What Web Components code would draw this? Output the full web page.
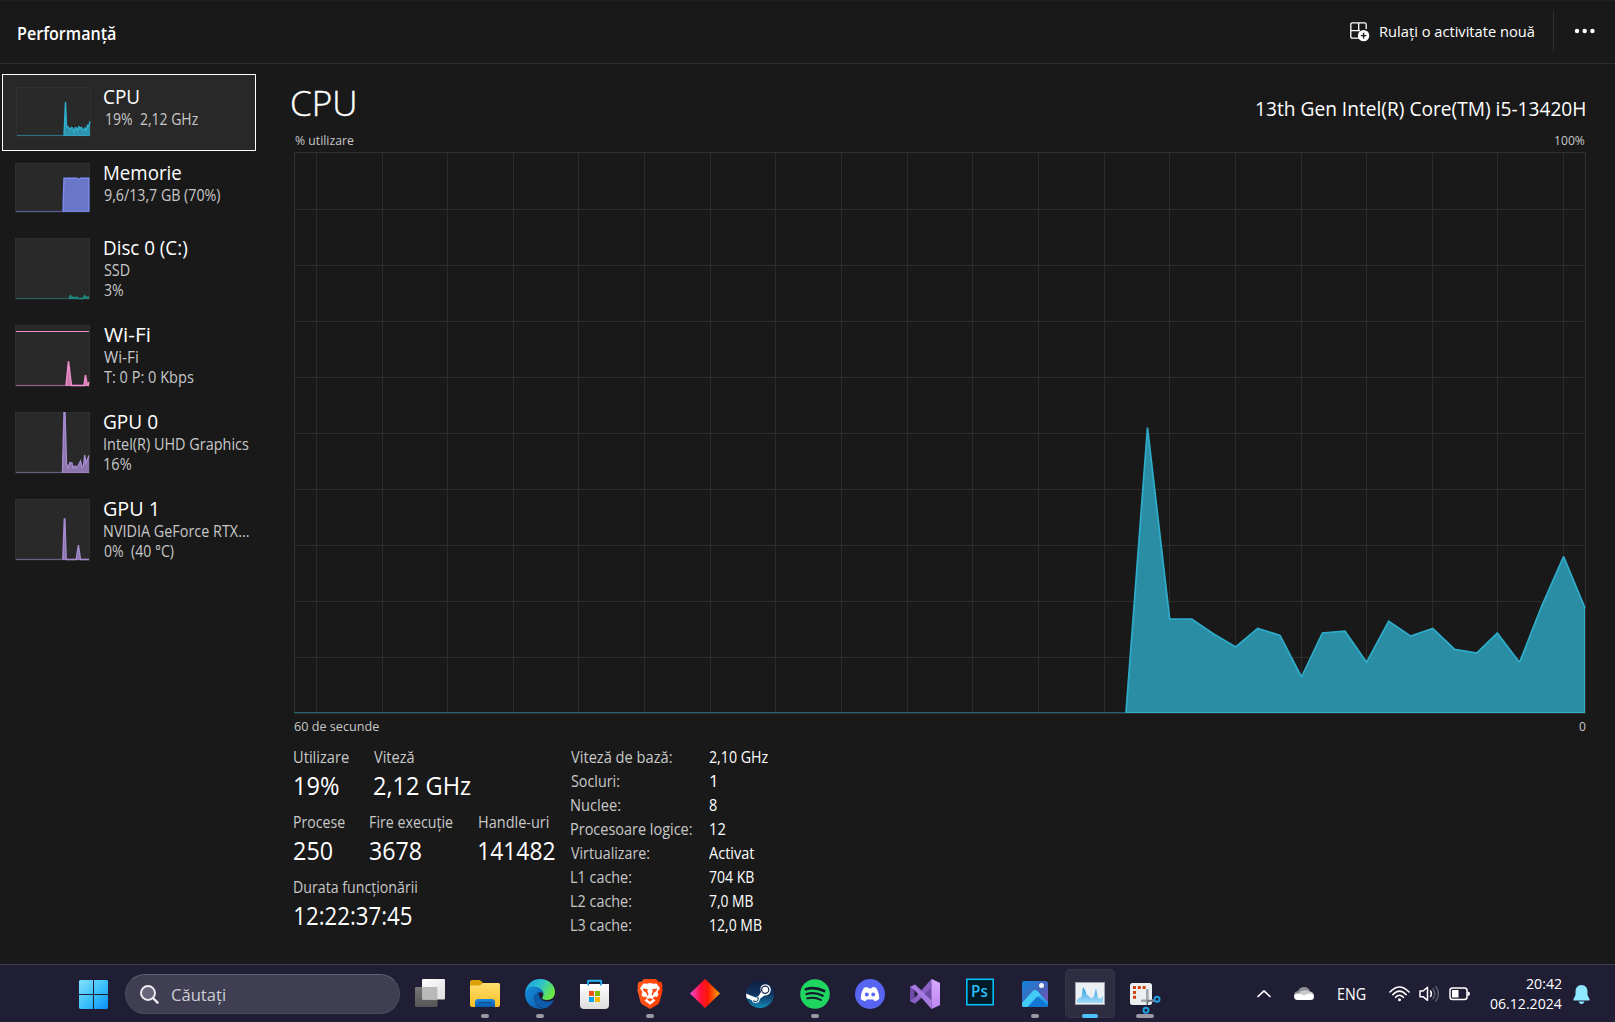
<!DOCTYPE html>
<html lang="ro">
<head>
<meta charset="utf-8">
<title>Performanță</title>
<style>
html,body{margin:0;height:100%;background:#191919;overflow:hidden}
body{font-family:"Open Sans","Noto Sans",sans-serif;color:#fff}
</style>
</head>
<body>
<task-manager></task-manager>
<script>
const FAMILY = '"Open Sans","Noto Sans",sans-serif';
const ruler = document.createElement('canvas').getContext('2d');

function define(name, html, setup) {
  const t = document.createElement('template');
  t.innerHTML = html;
  customElements.define(name, class extends HTMLElement {
    connectedCallback() {
      if (this.shadowRoot) return;
      this.attachShadow({ mode: 'open' }).appendChild(t.content.cloneNode(true));
      if (setup) setup(this, this.shadowRoot);
    }
  });
}

/* Text line: w = ink width, s = font size, h = box height, b = baseline inside the box */
define('t-l', `<style>
:host{display:block;flex:none;color:#fff}
span{display:block;width:max-content;white-space:pre;transform-origin:0 0}
</style><span><slot></slot></span>`, (el, root) => {
  const a = (n, d) => +(el.getAttribute(n) || d);
  const s = a('s', 15.4), wt = a('wt', 400), w = a('w', 50), h = a('h', 20), b = a('b', 16);
  ruler.font = `${wt} ${s}px ${FAMILY}`;
  const m = ruler.measureText(el.textContent);
  const k = w / (m.actualBoundingBoxLeft + m.actualBoundingBoxRight);
  const lead = Math.round(1.069 * s) - Math.round(0.293 * s);
  el.style.width = w + 'px';
  el.style.height = h + 'px';
  const sp = root.querySelector('span');
  sp.style.cssText = `font:${wt} ${s}px/${2 * b - lead}px ${FAMILY};transform:translateX(${m.actualBoundingBoxLeft * k}px) scaleX(${k})`;
  if (el.hasAttribute('dim')) el.style.color = '#c8c8c8';
});

const LOAD = [[1126,712.7],[1147.5,427.5],[1169.7,619],[1191.7,619],[1213.3,633.7],[1235.7,647],[1257.7,628.4],[1280,635.4],[1301.5,677],[1322.4,633],[1345,631.2],[1366.5,662.3],[1388.7,621.2],[1410.7,636.1],[1432.7,628.4],[1454.7,649.4],[1476.7,653.1],[1497.3,633.1],[1519.6,662.4],[1541.6,606.3],[1563.6,556.5],[1585,608]];

const MINI = {
  cpu: ['#2fb0cf', LOAD.map(([x, y]) => [48 + (x - 1126) * 26 / 459, 48.5 - (712.7 - y) * 48 / 420]).map((p, i) => i === 1 ? [49.5, 15] : p[1] > 48 ? p : [p[0], 48.5 - (48.5 - p[1]) * .84]).slice(0, -2).concat([[72.8, 39], [74, 34.5]]), 49],
  mem: ['#7c8cf5', [[48,48.5],[49,15.3],[62,15.3],[63.5,16.5],[65.5,15.3],[73.8,15.3],[73.8,48.5]], 49],
  disk: ['#1f8a85', [[54,60.5],[55.5,57.5],[57,60],[58,59],[60,60],[61.5,59],[63,60.5],[68,60.5],[69.5,57.5],[71,59.5],[74,59]], 61],
  net: ['#f48fcf', [[51,60.5],[53.5,36],[56.5,60.5],[69,60.5],[70.4,50],[72,58],[73,60],[74,57]], 61],
  gpu0: ['#a78bd0', [[47.5,60.5],[49,0],[50,0],[51.5,52],[53,56],[55,50.5],[57,51],[58,56],[60,54],[61.5,56],[64,52],[65.5,49],[67,55],[68.5,54],[69.7,43],[71,51],[74,43.5]], 61],
  gpu1: ['#a78bd0', [[47.8,60.5],[49.3,20],[49.9,20],[51.2,60.5],[61.2,60.5],[63.4,46],[65.5,60.5],[74,60.5]], 61]
};
define('mini-graph', `<style>:host{display:block;flex:none;width:75px}svg{display:block}</style><div></div>`, (el, root) => {
  const [c, pts, h] = MINI[el.getAttribute('kind')];
  const line = pts.map(p => p.map(v => v.toFixed(1)).join()).join(' ');
  const end = pts[pts.length - 1][0];
  root.querySelector('div').innerHTML = `<svg width="75" height="${h + .5}" viewBox="0 0 75 ${h + .5}">
  <rect x=".5" y=".5" width="74" height="${h - .5}" fill="#292929" stroke="#303030"/>
  <path d="M1 ${h - .6}H74" stroke="${c}" stroke-opacity=".6"/>
  <polygon points="${pts[0][0]},${h} ${line} ${end},${h}" fill="${c}" fill-opacity=".78"/>
  <polyline points="${line}" fill="none" stroke="${c}" stroke-width="1.4"/>
  ${el.getAttribute('kind') === 'net' ? `<path d="M1 6.5H74" stroke="${c}"/>` : ''}</svg>`;
});

define('perf-item', `<style>
:host{display:flex;flex:none;box-sizing:border-box;height:87px;padding:12px 0 0 15px}
:host([short]){height:75px}
:host([selected]){height:77px;margin:10px 0 0 2px;width:254px;padding:12px 0 0 13px;border:1px solid #fff;background:#282828}
.t{display:flex;flex-direction:column;margin:-12px 0 0 13.7px}
:host([selected]) .t{margin:-13px 0 0 13.4px}
</style><div class="g"></div><div class="t"><slot></slot></div>`, (el, root) => {
  const g = document.createElement('mini-graph');
  g.setAttribute('kind', el.getAttribute('kind'));
  root.querySelector('.g').replaceWith(g);
});

define('side-nav', `<style>:host{display:flex;flex-direction:column;flex:none;width:294px}</style>
<perf-item kind="cpu" selected><t-l w="35" s="19.3" h="34" b="30">CPU</t-l><t-l dim w="92" b="17" style="margin-left:1.2px">19%  2,12 GHz</t-l></perf-item>
<perf-item kind="mem" short><t-l w="77" s="19.3" h="34" b="29">Memorie</t-l><t-l dim w="116">9,6/13,7 GB (70%)</t-l></perf-item>
<perf-item kind="disk"><t-l w="83" s="19.3" h="34" b="29">Disc 0 (C:)</t-l><t-l dim w="26">SSD</t-l><t-l dim w="19">3%</t-l></perf-item>
<perf-item kind="net"><t-l w="46" s="19.3" h="34" b="29">Wi-Fi</t-l><t-l dim w="34">Wi-Fi</t-l><t-l dim w="89.5">T: 0 P: 0 Kbps</t-l></perf-item>
<perf-item kind="gpu0"><t-l w="54" s="19.3" h="34" b="29">GPU 0</t-l><t-l dim w="144.5">Intel(R) UHD Graphics</t-l><t-l dim w="27" style="margin-left:.7px">16%</t-l></perf-item>
<perf-item kind="gpu1"><t-l w="52" s="19.3" h="34" b="29">GPU 1</t-l><t-l dim w="144.5">NVIDIA GeForce RTX...</t-l><t-l dim w="69.5" style="margin-left:.5px">0%  (40 °C)</t-l></perf-item>`);

define('page-header', `<style>
:host{display:flex;flex:none;box-sizing:border-box;height:64px;border-top:1px solid #1c2023;border-bottom:1px solid #2f2f2f;padding:0 19px 0 17.5px}
.g{flex:1}svg{display:block;flex:none}.sep{width:1px;height:40px;margin:10px 20px 0 19px;background:#303030}
</style>
<t-l w="97.5" s="17.3" wt="600" h="60" b="39">Performanță</t-l><div class="g"></div>
<svg width="20" height="20" viewBox="0 0 20 20" style="margin:21px 10px 0 0" fill="none" stroke="#fff" stroke-width="1.3">
<path d="M9 16.2H2.4Q.8 16.2 .8 14.6V2.4Q.8 .8 2.4 .8H14.6Q16.2 .8 16.2 2.4V7M8.7 .8V8.7M.8 8.7H10"/><circle cx="13.6" cy="13.6" r="5.7" fill="#fff" stroke="none"/><path d="M13.6 10.8V16.4M10.8 13.6H16.4" stroke="#191919" stroke-width="1.4"/></svg>
<t-l w="154.5" s="15.2" h="60" b="36">Rulați o activitate nouă</t-l>
<div class="sep"></div>
<svg width="22" height="6" viewBox="0 0 22 6" style="margin-top:27px" fill="#fff"><circle cx="3" cy="3" r="2.2"/><circle cx="10.7" cy="3" r="2.2"/><circle cx="18.4" cy="3" r="2.2"/></svg>`);

define('cpu-graph', `<style>:host{display:block;height:562px}svg{display:block}</style><div></div>`, (el, root) => {
  let grid = '';
  for (let k = 0; k < 20; k++) grid += `M${Math.floor(316.4 + 65.64 * k) + .5} 152V713`;
  for (let k = 1; k < 10; k++) grid += `M294 ${153.5 + 56 * k}H1584`;
  const line = LOAD.map(p => p.join()).join(' ');
  root.querySelector('div').innerHTML = `<svg width="1292" height="562" viewBox="294 152 1292 562">
  <path d="${grid}" stroke="#2c2c2c" fill="none"/>
  <rect x="294.5" y="152.5" width="1291" height="561" fill="none" stroke="#303030"/>
  <path d="M294 712.5H1126" stroke="#1e6475"/>
  <polygon points="${line} 1585,713 1126,713" fill="#2ea5c1" fill-opacity=".83"/>
  <polyline points="${line}" fill="none" stroke="#2eadcb" stroke-width="1.7" stroke-linejoin="miter" stroke-miterlimit="2"/>
  <path d="M1584.5 609V712.5H1126" fill="none" stroke="#2eadcb"/></svg>`;
});

define('stat-box', `<style>:host{display:flex;flex-direction:column;flex:none}</style><slot></slot>`);
define('cpu-stats', `<style>
:host{display:flex}
.l{width:276.8px;flex:none;padding-left:.4px}.r{display:flex;height:65px}
.i{padding-top:8px}.p{display:grid;grid-template-columns:137.4px auto;height:24px}
</style>
<div class="l">
<div class="r"><stat-box style="width:79.5px"><t-l dim w="54.5" h="32" b="25">Utilizare</t-l><t-l w="44" s="24.8" h="33" b="25" style="margin-left:1px">19%</t-l></stat-box>
<stat-box><t-l dim w="40" h="32" b="25">Viteză</t-l><t-l w="96.5" s="24.8" h="33" b="25">2,12 GHz</t-l></stat-box></div>
<div class="r"><stat-box style="width:76px"><t-l dim w="50.5" h="32" b="25">Procese</t-l><t-l w="38" s="24.8" h="33" b="25">250</t-l></stat-box>
<stat-box style="width:108.5px"><t-l dim w="82.5" h="32" b="25">Fire execuție</t-l><t-l w="51" s="24.8" h="33" b="25">3678</t-l></stat-box>
<stat-box><t-l dim w="69.5" h="32" b="25">Handle-uri</t-l><t-l w="75.5" s="24.8" h="33" b="25" style="margin-left:.5px">141482</t-l></stat-box></div>
<div class="r"><stat-box><t-l dim w="123" h="32" b="25">Durata funcționării</t-l><t-l w="116.5" s="24.8" h="33" b="25" style="margin-left:1px">12:22:37:45</t-l></stat-box></div>
</div>
<div class="i"></div>`, (el, root) => {
  root.querySelector('.i').innerHTML = [['Viteză de bază:',100.5,'2,10 GHz',59],['Socluri:',48,'1',5.5],['Nuclee:',49,'8',7.5],['Procesoare logice:',120.5,'12',15],['Virtualizare:',78,'Activat',46],['L1 cache:',60,'704 KB',45.5],['L2 cache:',60,'7,0 MB',44.5],['L3 cache:',60,'12,0 MB',52]]
    .map(([a, w, b, v]) => `<div class="p"><t-l dim w="${w}" h="24" b="17">${a}</t-l><t-l w="${v}" h="24" b="17"${b[0] === '1' ? ' style="margin-left:1px"' : ''}>${b}</t-l></div>`).join('');
});

define('cpu-page', `<style>
:host{display:flex;flex-direction:column;width:1292px}
.b{display:flex;justify-content:space-between;flex:none}
</style>
<div class="b" style="margin:0 1.5px 0 -1.8px"><t-l w="62.5" s="34.6" wt="300" h="60" b="52" style="-webkit-text-stroke:.4px #fff">CPU</t-l><t-l w="329" s="19.6" h="60" b="52">13th Gen Intel(R) Core(TM) i5-13420H</t-l></div>
<div class="b"><t-l dim w="58.5" s="13" h="28" b="21" style="margin-left:.6px">% utilizare</t-l><t-l dim w="30" s="13" h="28" b="21" style="margin-right:1px">100%</t-l></div>
<cpu-graph></cpu-graph>
<div class="b"><t-l dim w="85" s="13" h="24" b="17">60 de secunde</t-l><t-l dim w="6.5" s="13" h="24" b="17" style="margin-right:.5px">0</t-l></div>
<cpu-stats></cpu-stats>`);

const ICONS = {
taskview: `<defs><linearGradient id="a" x2="0" y2="1"><stop stop-color="#777"/><stop offset="1" stop-color="#555"/></linearGradient><linearGradient id="b" x2="1" y2="1"><stop stop-color="#fff"/><stop offset="1" stop-color="#dedede"/></linearGradient></defs><rect x="1" y="9" width="22.5" height="20" rx="1" fill="url(#a)"/><rect x="8" y="1" width="23" height="20.5" rx="1" fill="url(#b)"/><path d="M8 9H23.5V21.5H9Q8 21.5 8 20.5Z" fill="#b9b9b9"/>`,
explorer: `<defs><linearGradient id="a" x2="0" y2="1"><stop stop-color="#ffdf70"/><stop offset="1" stop-color="#fcbf22"/></linearGradient><linearGradient id="b" x2="0" y2="1"><stop stop-color="#1b8be0"/><stop offset="1" stop-color="#0c5aa8"/></linearGradient></defs><path d="M1 4Q1 2 3 2H10Q11 2 12 3L14 5V10H1Z" fill="#e0a00b"/><path d="M1 7.5H11L14 5H29.5Q31 5 31 6.5V27Q31 29 29 29H3Q1 29 1 27Z" fill="url(#a)"/><path d="M6 29V24Q6 21 9 21H23Q26 21 26 24V29Z" fill="url(#b)"/><path d="M10 24.7H22" stroke="#0a4d91" stroke-width="1.3" stroke-linecap="round"/>`,
edge: `<defs><linearGradient id="a" x2="1" y2=".5"><stop stop-color="#1b9de2"/><stop offset=".5" stop-color="#2cc3cf"/><stop offset="1" stop-color="#6be845"/></linearGradient><linearGradient id="b" x2="1" y2="1"><stop stop-color="#1792df"/><stop offset="1" stop-color="#0b54a6"/></linearGradient></defs><path d="M1 16C1.5 7 8 1 16 1C25 1 31 7 31 14C31 19 27.5 22 23 22C20 22 18.2 21 18.2 19.7C18.2 18.7 19.4 18.5 19.4 16C19.4 12 14 9 9 9C5 9 2 12 1 16Z" fill="url(#a)"/><path d="M1 16C2 11 5 8.5 9.5 8.5C14.5 8.5 19.4 11.5 19.4 15.5C16 12.5 10.5 15 10.5 20.5C10.5 26.5 16 31 21 30C11 33.5 1 26.5 1 16Z" fill="url(#b)"/><path d="M14.5 14.5C10.5 15.5 9.5 22 12.5 26C15.5 30 21 31.5 24 29C26.5 27.3 28.5 25 29.3 23C29.6 22.2 29 22 28.3 22.4C23.5 25 14.5 23.5 14.5 14.5Z" fill="#0d5cac"/>`,
store: `<defs><linearGradient id="a" x2="0" y2="1"><stop stop-color="#fff"/><stop offset="1" stop-color="#dcdcdc"/></linearGradient></defs><path d="M9 7.5V3.3Q9 2.7 9.6 2.7H21.6Q22.2 2.7 22.2 3.3V7.5" fill="none" stroke="#28b8f4" stroke-width="1.9"/><path d="M1 6H30V27Q30 31 26 31H5Q1 31 1 27Z" fill="url(#a)"/><path d="M9.3 4.5V7.5M21.9 4.5V7.5" stroke="#1590d8" stroke-width="1.6"/><path d="M10 13H15V18H10Z" fill="#f1511b"/><path d="M16 13H21V18H16Z" fill="#80b900"/><path d="M10 19H15V24H10Z" fill="#00a3ee"/><path d="M16 19H21V24H16Z" fill="#fdb800"/>`,
brave: `<defs><linearGradient id="a"><stop stop-color="#ff5a1c"/><stop offset="1" stop-color="#ff3a00"/></linearGradient></defs><path d="M10 1H22L24.5 3.8L27.5 4L28.5 8L28 10L28.7 12L25.5 24Q25 25.5 23.5 26.5L16 31L8.5 26.5Q7 25.5 6.5 24L3.3 12L4 10L3.5 8L4.5 4L7.5 3.8Z" fill="url(#a)"/><path d="M16 5L19 5.8L22.5 5.5L26 10.2L23.5 14L24.5 16.5L23 19L21 18.5L18.5 20L21.5 22.5L16 26.7L10.5 22.5L13.5 20L11 18.5L9 19L7.5 16.5L8.5 14L6 10.2L9.5 5.5L13 5.8Z" fill="#fff"/><path d="M9 10.5L14 11.3L13.3 12.8L14.5 16.5L13.5 18L12 14.5L9.5 13Z M23 10.5L18 11.3L18.7 12.8L17.5 16.5L18.5 18L20 14.5L22.5 13ZM13 21.5L16 20L19 21.5L16 23.5Z" fill="#fc4a12"/>`,
diamond: `<defs><linearGradient id="a"><stop stop-color="#ef50d8"/><stop offset=".35" stop-color="#ff1040"/><stop offset=".6" stop-color="#fb1a05"/><stop offset="1" stop-color="#ffa800"/></linearGradient></defs><path d="M1 15.5L16 1L31 15.5L16 30Z" fill="url(#a)"/>`,
steam: `<defs><linearGradient id="a" x2="0" y2="1"><stop stop-color="#101c3d"/><stop offset=".5" stop-color="#10345f"/><stop offset="1" stop-color="#1387b8"/></linearGradient></defs><circle cx="16" cy="16" r="14" fill="url(#a)"/><path d="M2 15.5L11.5 19.5L14.5 18L17 14Q15 7 21 6.2Q27 6.5 26.8 12.5Q26 17.5 20.5 17.5L16 20.8Q15.5 25 11.5 25Q8.5 25 7.5 22L2.5 20Z" fill="#fff"/><circle cx="21.2" cy="11.8" r="4.2" fill="#16294d"/><circle cx="21.2" cy="11.8" r="3" fill="#fff"/><path d="M9 22.7Q13.5 25 14.3 21Q14.5 19 12.5 18.7" fill="none" stroke="#174a76" stroke-width="1.1"/>`,
spotify: `<circle cx="16" cy="16" r="14.8" fill="#1fd760"/><g fill="none" stroke="#17172b" stroke-linecap="round"><path d="M6.8 11.2Q16 8.5 25.2 13" stroke-width="2.7"/><path d="M7.5 16Q16 13.7 23.7 17.7" stroke-width="2.3"/><path d="M8.2 20.4Q15.5 18.6 22 22" stroke-width="1.9"/></g>`,
discord: `<circle cx="16" cy="16" r="15" fill="#5865f2"/><path d="M10 9.7Q12 9 13.5 9L14.2 10.2H17.8L18.5 9Q20.5 9 22 9.7Q25.5 15 25.2 21Q23 23 20.5 23.2L19.4 21.5H12.6L11.5 23.2Q9 23 6.8 21Q6.5 15 10 9.7Z" fill="#fff"/><ellipse cx="12.8" cy="16.5" rx="1.9" ry="2.1" fill="#5865f2"/><ellipse cx="19.2" cy="16.5" rx="1.9" ry="2.1" fill="#5865f2"/>`,
vs: `<defs><linearGradient id="a" x2="0" y2="1"><stop stop-color="#d9a9ff"/><stop offset="1" stop-color="#bb85ef"/></linearGradient></defs><path d="M1 9L6 6.5L16 15.5L22.5 8V1L31 5V27L22.5 31V23L16 17L6 25.5L1 23ZM5.5 12V20L9.5 16Z" fill="#6d4aa5" fill-rule="evenodd"/><path d="M1 23L6 25.5L22.5 9.5V1L5.5 20Z" fill="#8a60c6"/><path d="M1 9L6 6.5L22.5 22.5V31L5.5 12Z" fill="#a57be0"/><path d="M22.5 1L31 5V27L22.5 31Z" fill="url(#a)"/>`,
ps: `<rect x="2.8" y="1.3" width="26.4" height="25.4" fill="#001b26" stroke="#00bff5" stroke-width="1.6"/>`,
photos: `<defs><linearGradient id="a" x2="1" y2="1"><stop stop-color="#1184dc"/><stop offset=".6" stop-color="#4b62b8"/><stop offset="1" stop-color="#8e4bb8"/></linearGradient><linearGradient id="b" x2="1" y2="1"><stop stop-color="#5fe2ff"/><stop offset="1" stop-color="#0f7fe0"/></linearGradient><clipPath id="c"><rect x="3" y="3" width="26" height="26" rx="2.5"/></clipPath></defs><g clip-path="url(#c)"><path d="M3 3H29V29H3Z" fill="url(#a)"/><path d="M1 28L14 13Q16 11 18 13L31 26V31H1Z" fill="url(#b)"/><path d="M9 29L17 20Q19 18 21 20L30 29Z" fill="#1276d4"/><path d="M3 25L13.5 13.5Q16 11 18.5 13.5L22 17L17 19L8 29H3Z" fill="#41cbf7"/></g><circle cx="22.5" cy="7.5" r="2.5" fill="#f5f4fb"/>`,
taskmgr: `<defs><linearGradient id="a" x2="0" y2="1"><stop stop-color="#2d9be4"/><stop offset="1" stop-color="#a6dcf8"/></linearGradient></defs><rect x="1.5" y="4.5" width="29" height="22" fill="#eaf0f3" stroke="#9da4ac"/><path d="M3 22L5 20L7.5 19L9 9L11 12L13 17L16 19L18 20.5L20 18L22 10.5L24 20L27 20.5L29 18V25H3Z" fill="url(#a)"/>`,
snip: `<rect x="1" y="5" width="22" height="22" rx="2.5" fill="#eceef0"/><g fill="none" stroke="#d5420e" stroke-width="3"><path d="M4 9.5H18" stroke-dasharray="3 1.8"/><path d="M5.5 13V21.5" stroke-dasharray="3 1.8"/></g><path d="M18.3 11V25M12 22.7H25" stroke="#a3a8ad" stroke-width="2.6"/><path d="M18.3 22.7V27M18.3 22.7H25" stroke="#6e7479" stroke-width="1.5"/><g fill="none" stroke="#1e9ee3" stroke-width="2"><circle cx="28" cy="21.2" r="2.5"/><circle cx="17" cy="32.3" r="2.5"/></g>`
};
define('app-icon', `<style>
:host{display:flex;flex-direction:column;align-items:center;flex:none;box-sizing:border-box;width:50px;height:49px;margin:4px 5px 0 0;padding-top:9px;border-radius:5px}
:host([active]){background:#2e2d42;box-shadow:inset 0 0 0 1px #353449}
.ic{position:relative;width:32px;height:36px}svg{display:block;overflow:visible}
.d{height:4px;border-radius:2px;background:#9b99a6;flex:none}
.ps{position:absolute;left:8px;top:3px}
</style><div class="ic"></div><div class="d"></div>`, (el, root) => {
  const n = el.getAttribute('name');
  root.querySelector('.ic').innerHTML = `<svg width="32" height="32" viewBox="0 0 32 32">${ICONS[n]}</svg>` +
    (n === 'ps' ? '<t-l class="ps" w="16" s="16" wt="600" h="20" b="16" style="color:#2bbdf5">Ps</t-l>' : '');
  const d = root.querySelector('.d');
  d.style.width = (el.getAttribute('dot') || 0) + 'px';
  if (el.hasAttribute('active')) d.style.background = '#4cc2ff';
});

define('start-button', `<style>:host{display:block;margin:15px 17px 0 79px;flex:none}svg{display:block}</style>
<svg width="29" height="29" viewBox="0 0 29 29"><defs><linearGradient id="w" gradientUnits="userSpaceOnUse" x2="29" y2="29"><stop stop-color="#83e0fc"/><stop offset=".5" stop-color="#3ec3fb"/><stop offset="1" stop-color="#0a8ff8"/></linearGradient></defs><path d="M1 0H14V14H0V1ZM15 0H28L29 1V14H15ZM0 15H14V29H1L0 28ZM15 15H29V28L28 29H15Z" fill="url(#w)"/></svg>`);

define('search-box', `<style>
:host{display:flex;flex:none;box-sizing:border-box;width:275px;height:40px;margin:9px 5px 0 0;border:1px solid #4c4b5d;border-top-color:#626172;border-radius:20px;background:#3f3e52;padding-left:14px}
svg{display:block;margin:10px 11.7px 0 0}</style>
<svg width="19" height="20" viewBox="0 0 19 20" fill="none" stroke="#eeeef2" stroke-width="1.9"><circle cx="8" cy="8" r="7" fill="#66657a"/><path d="M13 13L17.5 17.7" stroke-width="2.4" stroke-linecap="round"/></svg>
<t-l w="54" s="16.2" h="38" b="26" style="color:#cfced6">Căutați</t-l>`);

define('tray-area', `<style>
:host{display:flex;flex:none;width:359px}
svg{display:block;flex:none;margin-top:20px}
.c{display:flex;flex-direction:column;align-items:flex-end;padding-top:5px;margin:0 11.5px 0 19px}
</style>
<svg width="16" height="24" viewBox="0 0 16 24" fill="none" stroke="#fff" stroke-width="1.7" stroke-linecap="round" stroke-linejoin="round"><path d="M2 11.5L8 5.8L14 11.5"/></svg>
<svg width="22" height="24" viewBox="0 0 22 24" style="margin-left:21px"><path d="M1 10Q1 6.5 5 6Q7 2 11 2Q16 2 17 6.5L8 11Z" fill="#8e8e97"/><path d="M17 6.5Q21 7 21 11L10 11L6 7Q12 4 17 6.5Z" fill="#c8c8ce"/><path d="M1 11Q1.5 8.5 5 8.5Q8 8 11 10.5Q14 8.5 17 8.5Q21 9 21 12Q21 15 17.5 15H4.5Q1 15 1 11Z" fill="#fff"/></svg>
<t-l w="28" s="15.4" h="50" b="35" style="margin-left:23px">ENG</t-l>
<svg width="21" height="24" viewBox="0 0 21 24" style="margin-left:22.5px" fill="none" stroke="#fff" stroke-width="1.6" stroke-linecap="round"><path d="M1 7Q10.5 -3 20 7"/><path d="M3.8 9.7Q10.5 2.5 17.2 9.7"/><path d="M6.6 12.3Q10.5 8.2 14.4 12.3"/><circle cx="10.5" cy="14.8" r="1.5" fill="#fff" stroke="none"/></svg>
<svg width="22" height="24" viewBox="0 0 22 24" style="margin-left:9px" fill="none" stroke="#fff" stroke-width="1.5" stroke-linecap="round" stroke-linejoin="round"><path d="M1 6H4L8.5 2.2V15.3L4 11.7H1Z"/><path d="M11.5 6Q13.3 8.8 11.5 11.5"/><path d="M14 3.8Q17.5 8.7 14 13.7M16.8 1.5Q22 8.7 16.8 16" stroke="#5b5a6b"/></svg>
<svg width="22" height="24" viewBox="0 0 22 24" style="margin-left:8px"><rect x="1" y="3" width="17" height="11.5" rx="2.5" fill="none" stroke="#fff" stroke-width="1.5"/><path d="M3 5H9.5V12.5H3ZM18.5 6.5Q21 6.5 21 8.75Q21 11 18.5 11Z" fill="#fff"/></svg>
<div class="c"><t-l w="35.5" s="15.3" h="20" b="19">20:42</t-l><t-l w="72" s="15.3" h="20" b="19">06.12.2024</t-l></div>
<svg width="17" height="24" viewBox="0 0 17 24"><path d="M8.5 0C4.5 0 2.5 3 2.5 6.5V10L.3 14.5Q0 15.5 1 15.5H16Q17 15.5 16.7 14.5L14.5 10V6.5C14.5 3 12.5 0 8.5 0ZM5.5 16.5H11.5Q10.5 19 8.5 19Q6.5 19 5.5 16.5Z" fill="#8fe8ff"/></svg>`);

define('task-bar', `<style>:host{display:flex;flex:none;box-sizing:border-box;height:58px;border-top:1px solid #403f4d;background:#1f1e35}.g{flex:1}</style>
<start-button></start-button><search-box></search-box>
<app-icon name="taskview"></app-icon><app-icon name="explorer" dot="8"></app-icon><app-icon name="edge" dot="8"></app-icon><app-icon name="store"></app-icon><app-icon name="brave" dot="8"></app-icon><app-icon name="diamond"></app-icon><app-icon name="steam"></app-icon><app-icon name="spotify" dot="8"></app-icon><app-icon name="discord"></app-icon><app-icon name="vs"></app-icon><app-icon name="ps"></app-icon><app-icon name="photos" dot="8"></app-icon><app-icon name="taskmgr" dot="16" active></app-icon><app-icon name="snip" dot="18"></app-icon>
<div class="g"></div><tray-area></tray-area>`);

define('task-manager', `<style>:host{display:flex;flex-direction:column;width:1615px;height:1022px;background:#191919}.m{display:flex;flex:none;height:900px}</style>
<page-header></page-header><div class="m"><side-nav></side-nav><cpu-page></cpu-page></div><task-bar></task-bar>`);
</script>
</body>
</html>
